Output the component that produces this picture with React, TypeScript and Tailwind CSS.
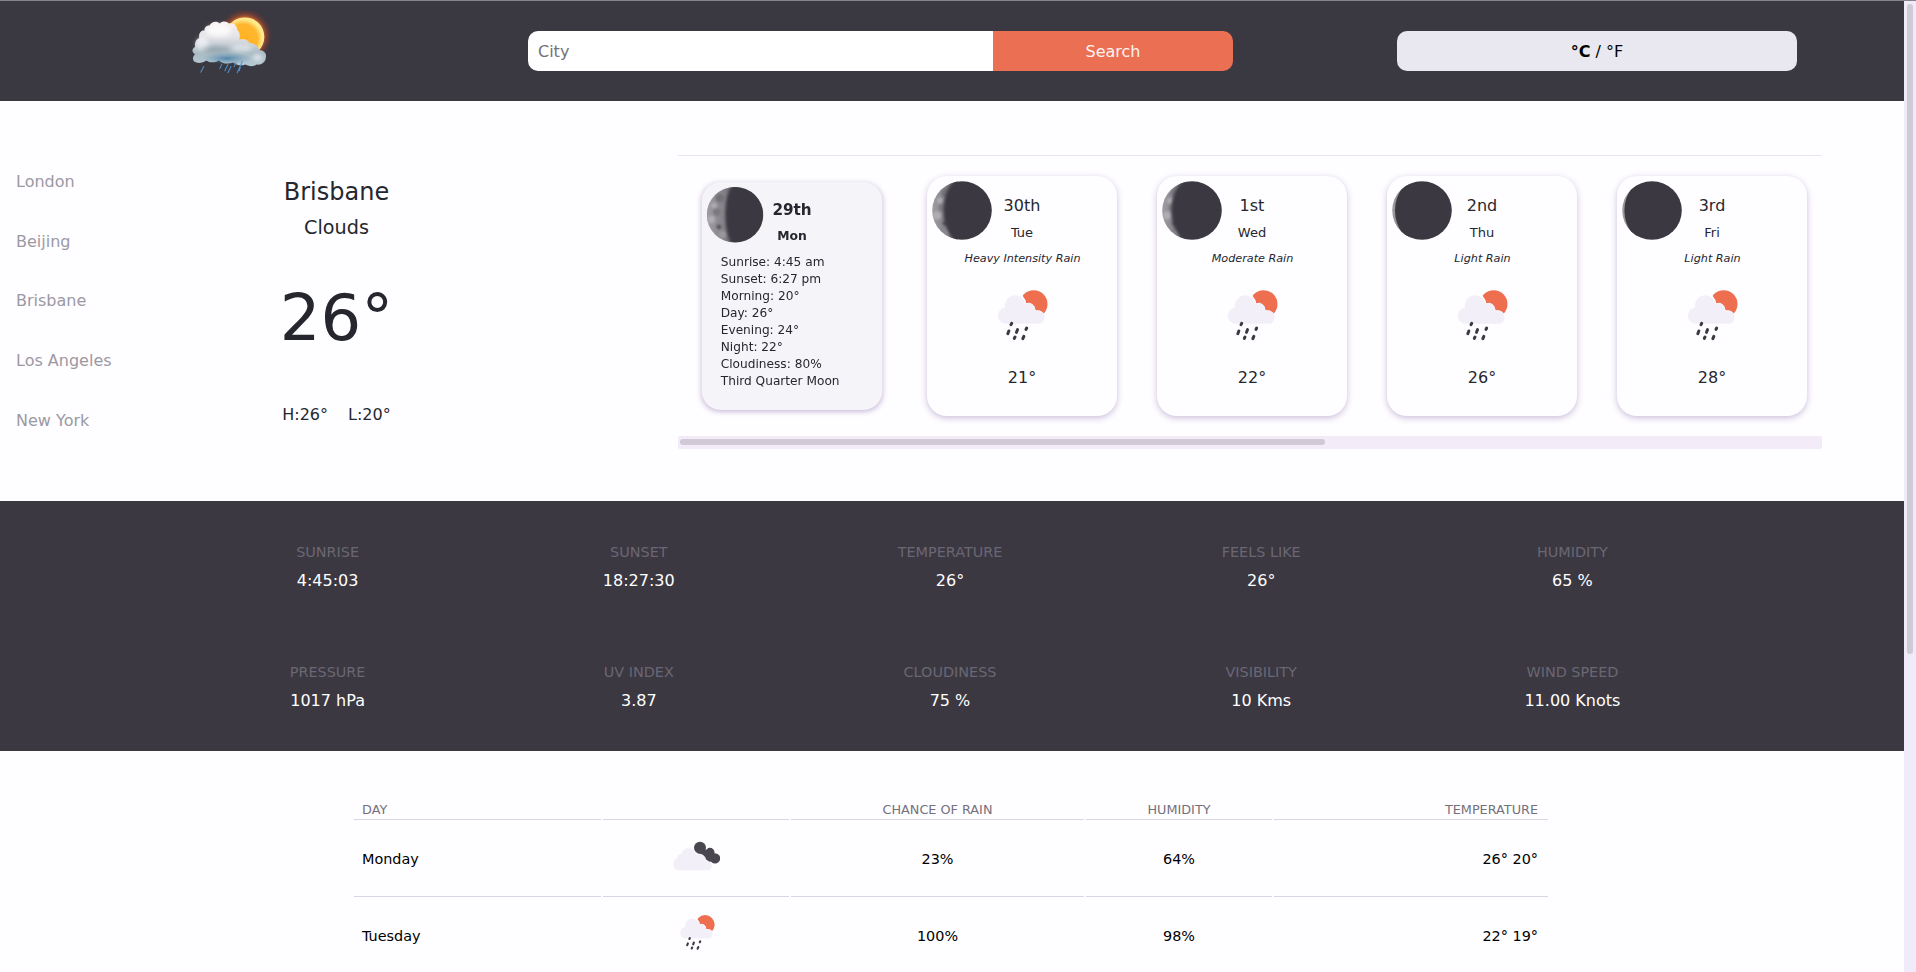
const cities = ["London", "Beijing", "Brisbane", "Los Angeles", "New York"];

const details = [
  "Sunrise: 4:45 am",
  "Sunset: 6:27 pm",
  "Morning: 20°",
  "Day: 26°",
  "Evening: 24°",
  "Night: 22°",
  "Cloudiness: 80%",
  "Third Quarter Moon",
];

const forecast = [
  { date: "30th", day: "Tue", text: "Heavy Intensity Rain", temp: "21°", lit: 11.5 },
  { date: "1st", day: "Wed", text: "Moderate Rain", temp: "22°", lit: 9.5 },
  { date: "2nd", day: "Thu", text: "Light Rain", temp: "26°", lit: 3 },
  { date: "3rd", day: "Fri", text: "Light Rain", temp: "28°", lit: 2.4 },
];

const stats = [
  ["SUNRISE", "4:45:03"],
  ["SUNSET", "18:27:30"],
  ["TEMPERATURE", "26°"],
  ["FEELS LIKE", "26°"],
  ["HUMIDITY", "65 %"],
  ["PRESSURE", "1017 hPa"],
  ["UV INDEX", "3.87"],
  ["CLOUDINESS", "75 %"],
  ["VISIBILITY", "10 Kms"],
  ["WIND SPEED", "11.00 Knots"],
];

function Logo() {
  return (
    <svg className="h-[82px] w-[82px] overflow-visible" viewBox="0 0 80 80">
      <defs>
        <radialGradient id="glow">
          <stop offset="0.6" stopColor="#ff8a1e" stopOpacity="0.95" />
          <stop offset="0.78" stopColor="#b5482a" stopOpacity="0.5" />
          <stop offset="1" stopColor="#6a3032" stopOpacity="0" />
        </radialGradient>
        <radialGradient id="sun" cx="0.45" cy="0.55">
          <stop offset="0" stopColor="#ffb321" />
          <stop offset="0.75" stopColor="#ffb62f" />
          <stop offset="1" stopColor="#ffe98c" />
        </radialGradient>
        <linearGradient id="puff" x1="0" y1="0" x2="0" y2="1">
          <stop offset="0" stopColor="#fbf1f2" />
          <stop offset="0.35" stopColor="#e2e2e6" />
          <stop offset="0.7" stopColor="#a9bac4" />
          <stop offset="1" stopColor="#b4c9d2" />
        </linearGradient>
        <radialGradient id="shade">
          <stop offset="0" stopColor="#2f6f9f" stopOpacity="0.7" />
          <stop offset="1" stopColor="#4b83ab" stopOpacity="0" />
        </radialGradient>
        <filter id="soft" x="-10%" y="-10%" width="120%" height="120%">
          <feGaussianBlur stdDeviation="0.5" />
        </filter>
        <filter id="haze" x="-40%" y="-40%" width="180%" height="180%">
          <feGaussianBlur stdDeviation="2" />
        </filter>
      </defs>
      <circle cx="54.500" cy="33" r="27" fill="url(#glow)" />
      <circle cx="54.500" cy="34" r="19" fill="url(#sun)" />
      <g filter="url(#soft)">
        <path
          d="M5 58C3 56 4 52 6 51C2 49 3 45 6 44C5 40 7 36 10 35C9 31 12 27 15 28C15 24 18 23 20 23C22 19 27 18 30 21C33 18 37 19 39 21C43 20 47 23 47 27C50 30 50 33 49 37C53 35 57 37 59 40C64 40 67 43 69 47C73 47 76 50 75 54C75 58 71 62 66 61C62 64 57 62 55 61C50 63 46 61 43 59C38 61 32 60 29 57C24 60 20 59 17 57C13 60 8 60 5 58Z"
          fill="url(#puff)"
        />
        <g filter="url(#haze)">
          <ellipse cx="29" cy="28" rx="12" ry="6" fill="#ffffff" opacity="0.75" />
          <ellipse cx="13" cy="41" rx="6" ry="7" fill="#ffffff" opacity="0.55" />
          <ellipse cx="52" cy="45" rx="10" ry="3.500" fill="#ffffff" opacity="0.45" />
          <ellipse cx="26" cy="46" rx="14" ry="3" fill="#7b8d9b" opacity="0.5" />
          <ellipse cx="67" cy="54" rx="5" ry="3" fill="#ffffff" opacity="0.6" />
        </g>
        <ellipse cx="37" cy="55" rx="24" ry="6" fill="url(#shade)" />
      </g>
      <path
        d="M14.500 63l-3 5.500M32 61l-2 4M38 61l-3 6M41 63l-3 6M46 59l-2 4M52 58l-5 11M50 64l-1 3"
        stroke="#4f93cd"
        strokeWidth="1"
        strokeLinecap="round"
      />
    </svg>
  );
}

function Moon({ id, lit }: { id: string; lit: number }) {
  const rx = 30 - lit;
  return (
    <svg
      className="absolute top-[5px] left-[5px] h-[59px] w-[60px]"
      viewBox="0 0 60 60"
      preserveAspectRatio="none"
    >
      <defs>
        <linearGradient id={id} x1="0" y1="0" x2="1" y2="0">
          <stop offset="0" stopColor="#a09ea4" />
          <stop offset="0.5" stopColor="#86848a" />
          <stop offset="1" stopColor="#5c5a60" />
        </linearGradient>
        <clipPath id={id + "-disc"}>
          <circle cx="30" cy="30" r="29.8" />
        </clipPath>
        <filter id={id + "-soft"} x="-20%" y="-20%" width="140%" height="140%">
          <feGaussianBlur stdDeviation={lit > 5 ? 1.5 : 0.4} />
        </filter>
        <filter id={id + "-haze"} x="-20%" y="-20%" width="140%" height="140%">
          <feGaussianBlur stdDeviation="1.3" />
        </filter>
      </defs>
      <g clipPath={"url(#" + id + "-disc)"}>
        <rect width={lit + 14} height="60" fill={"url(#" + id + ")"} />
        {lit > 5 && (
          <g filter={"url(#" + id + "-haze)"}>
            <circle cx="14" cy="12" r="4.500" fill="#737177" />
            <circle cx="8" cy="20" r="3" fill="#aeacb1" />
            <circle cx="11" cy="27" r="4" fill="#7b797f" />
            <circle cx="5" cy="35" r="4" fill="#b0aeb3" />
            <circle cx="13" cy="43" r="2.500" fill="#56545a" />
            <circle cx="17" cy="51" r="4" fill="#9a989d" />
          </g>
        )}
        <path
          d={"M30 -3A" + rx + " 33 0 0 0 30 63H70V-3Z"}
          fill="#3b3842"
          filter={"url(#" + id + "-soft)"}
        />
      </g>
    </svg>
  );
}

function Rain({ className }: { className: string }) {
  return (
    <svg className={className} viewBox="0 0 156 156">
      <circle cx="113" cy="42" r="41.500" fill="#ee6e50" />
      <path
        d="M28 103A26 26 0 0 1 27 51A31 31 0 0 1 84 24Q91 31 90 39Q113 36 119 61Q139 59 146 75V103Z"
        fill="#fefdff"
      />
      <path
        d="M26 101A24.200 24.200 0 0 1 27 53A31 31 0 0 1 88 41A20 20 0 0 1 117 63A20 20 0 0 1 133 101Z"
        fill="#f3eff8"
      />
      <path
        d="M47 100l-2 4M38.500 123l-3 8M64.500 119l-3 8M92 114l-2 4M57 141l-2 4M83.500 139l-3 7"
        stroke="#3b3842"
        strokeWidth="9"
        strokeLinecap="round"
      />
    </svg>
  );
}

function Clouds() {
  return (
    <svg className="mb-[8px] h-[30px] w-[48px]" viewBox="37 28 144 90">
      <g fill="#4a4650">
        <circle cx="121" cy="48" r="18" />
        <circle cx="151" cy="62" r="13.500" />
        <circle cx="166" cy="80" r="15.500" />
        <path d="M121 50L152 58L166 80L150 92L112 62Z" />
      </g>
      <path
        d="M57 116A19 19 0 0 1 54 79A12 12 0 0 1 65 66A22.500 22.500 0 0 1 109 69A20 20 0 0 1 139 87A15.500 15.500 0 0 1 148 116Z"
        fill="#f3eff8"
      />
    </svg>
  );
}

const rows = [
  { day: "Monday", icon: <Clouds />, rain: "23%", humidity: "64%", temp: "26° 20°" },
  {
    day: "Tuesday",
    icon: <Rain className="mb-[8px] ml-[2px] h-[36px] w-[36px]" />,
    rain: "100%",
    humidity: "98%",
    temp: "22° 19°",
  },
];

const tableGrid = "grid grid-cols-[247px_186px_293px_186px_274px] gap-x-[2px]";
const card = "relative h-[240px] w-[190px] shrink-0 rounded-[20px] shadow-[0_2px_6px_rgba(90,50,140,0.3)]";

export default function App() {
  return (
    <div className="flex h-[972px] w-[1916px] overflow-hidden bg-[#fefdff] font-['DejaVu_Sans',sans-serif] text-base text-[#26272e]">
      <div className="flex w-[1904px] shrink-0 flex-col">
        <header className="flex h-[101px] shrink-0 border-t border-[#84838c] bg-[#3a3841]">
          <div className="flex w-[528px] pt-px pl-[189px]">
            <Logo />
          </div>
          <div className="mt-[30px] flex h-10 w-[705px] overflow-hidden rounded-[10px]">
            <input
              className="w-[465px] bg-white px-[10px] pt-[2px] placeholder:text-[#757079] focus:outline-none"
              placeholder="City"
            />
            <button className="flex-1 bg-[#ea6f53] pt-[1px] text-[#fdf3f0]">Search</button>
          </div>
          <button className="mt-[30px] ml-[164px] h-10 w-[400px] rounded-[10px] bg-[#e9e8f1] pt-[1px] text-black">
            <b>°C</b> / °F
          </button>
        </header>

        <section className="flex h-[400px] shrink-0">
          <ul className="flex w-[258px] flex-col pt-[51px] pl-4 text-[#9c99a3]">
            {cities.map((c) => (
              <li key={c} className="flex h-[59.7px] items-center">
                {c}
              </li>
            ))}
          </ul>
          <div className="flex w-[157px] flex-col items-center pt-[74px]">
            <h1 className="text-2xl leading-[34px]">Brisbane</h1>
            <h2 className="mt-[5px] text-[19.2px] leading-[28px]">Clouds</h2>
            <p className="mt-[36px] text-[64px] leading-[80px]">26°</p>
            <p className="mt-[45px] flex gap-[20px] leading-6">
              <span>H:26°</span>
              <span>L:20°</span>
            </p>
          </div>
          <div className="mt-[54px] ml-[263px] flex h-[294px] w-[1144px] flex-col border-t border-[#e9e6f2]">
            <div className="flex gap-10 pt-5 pl-[19px]">
              <div className={card + " scale-95 bg-[#f5f4f9]"}>
                <Moon id="m0" lit={20} />
                <p className="pt-[18px] text-center font-bold leading-6">29th</p>
                <p className="mt-[5px] text-center text-[13px] leading-5 font-bold">Mon</p>
                <ul className="mt-[8px] pl-[20px] text-[12.8px] leading-[17.95px] whitespace-nowrap">
                  {details.map((d) => (
                    <li key={d}>{d}</li>
                  ))}
                </ul>
              </div>
              {forecast.map((f, i) => (
                <div key={f.date} className={card + " flex flex-col items-center bg-[#fefdff]"}>
                  <Moon id={"m" + (i + 1)} lit={f.lit} />
                  <p className="pt-[18px] leading-6">{f.date}</p>
                  <p className="mt-[5px] text-[13px] leading-5">{f.day}</p>
                  <p className="mt-[8px] pl-px text-[11.2px] leading-4 whitespace-nowrap italic">{f.text}</p>
                  <Rain className="mt-[23px] h-[52px] w-[52px]" />
                  <p className="mt-[24px] leading-6">{f.temp}</p>
                </div>
              ))}
            </div>
            <div className="mt-[20px] h-[13px] rounded-[2px] bg-[#f4ebf9] pt-[3px] pl-[2px]">
              <div className="h-[6px] w-[645px] rounded-[3px] bg-[#d0c9d6]" />
            </div>
          </div>
        </section>

        <section className="grid h-[250px] shrink-0 grid-cols-5 grid-rows-[120px_120px] bg-[#3b3842] pt-[41px] pr-[176px] pl-[172px] text-center">
          {stats.map(([label, value]) => (
            <div key={label}>
              <p className="text-[14.4px] leading-5 text-[#6a6774]">{label}</p>
              <p className="mt-[7px] leading-6 text-white">{value}</p>
            </div>
          ))}
        </section>

        <section className="pt-[48px] pl-[354px]">
          <div className={tableGrid + " text-[12.8px] leading-5 text-[#74717c]"}>
            {["DAY", "", "CHANCE OF RAIN", "HUMIDITY", "TEMPERATURE"].map((h, i) => (
              <div
                key={i}
                className="h-[21px] border-b border-[#d9d6e4] px-2 pt-px text-center first:text-left last:pr-[10px] last:text-right"
              >
                {h}
              </div>
            ))}
          </div>
          {rows.map((r) => (
            <div key={r.day} className={tableGrid + " text-[14.4px] text-black"}>
              {[r.day, r.icon, r.rain, r.humidity, r.temp].map((c, i) => (
                <div
                  key={i}
                  className="flex h-[77px] items-center justify-center border-b border-[#d9d6e4] px-2 pt-[4px] first:justify-start last:justify-end last:pr-[10px]"
                >
                  {c}
                </div>
              ))}
            </div>
          ))}
        </section>
      </div>
      <div className="flex w-[12px] flex-col border-t border-[#84838c] bg-[#f0ebf8] pt-[3px] pl-[3px]">
        <div className="h-[650px] w-[6px] rounded-[3px] bg-[#d0c9d6]" />
      </div>
    </div>
  );
}
